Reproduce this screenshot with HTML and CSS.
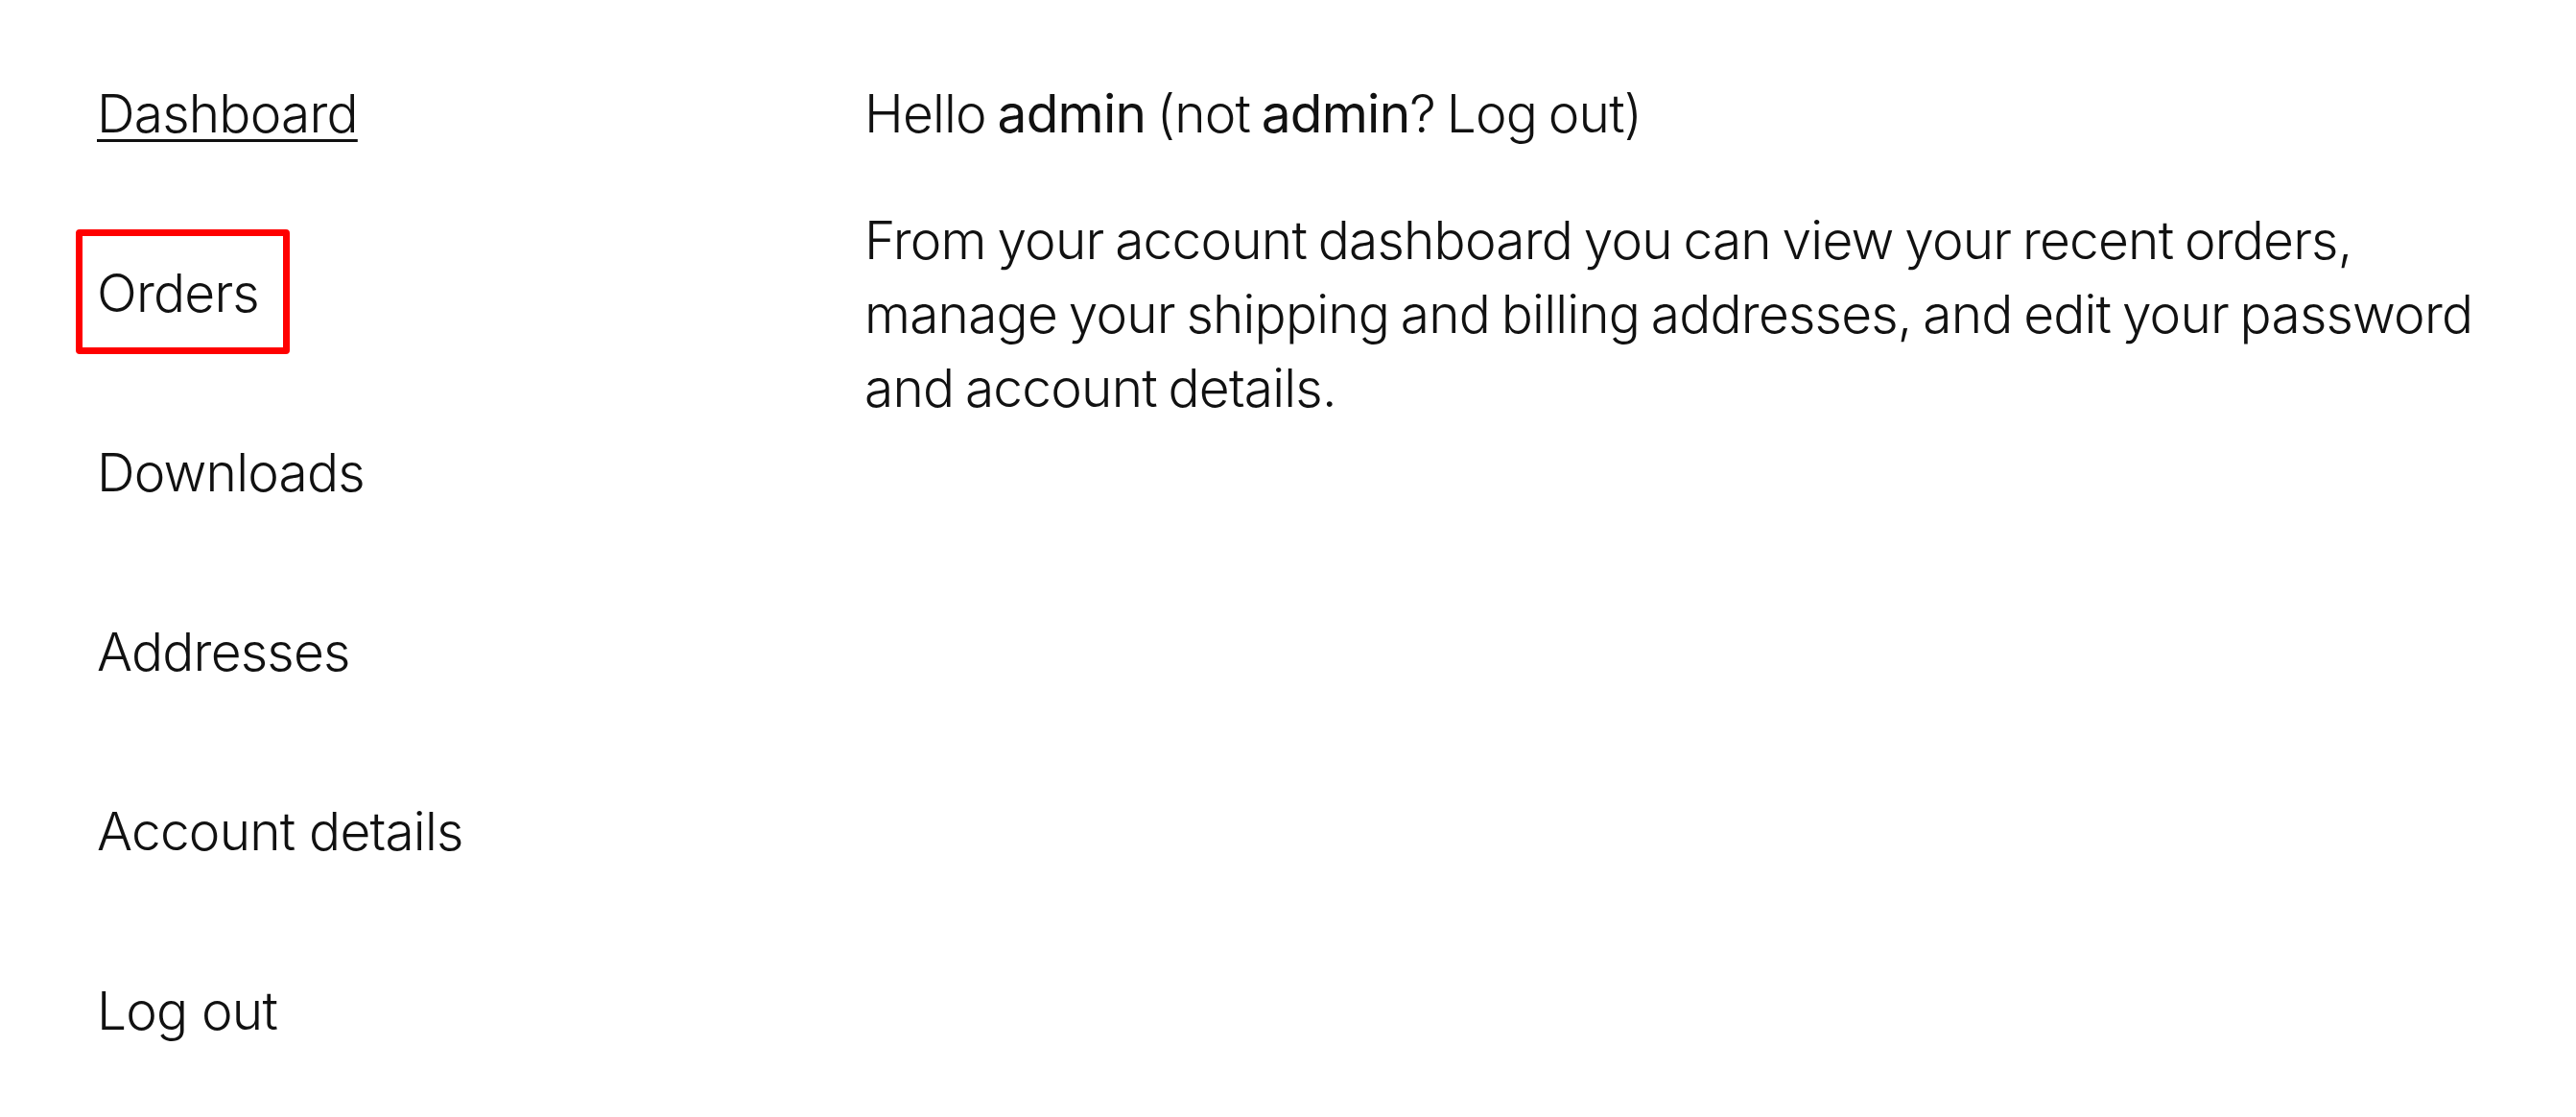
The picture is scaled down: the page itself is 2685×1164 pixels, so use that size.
FILE: index.html
```html
<!DOCTYPE html>
<html lang="en">
<head>
    <meta charset="UTF-8">
    <meta name="viewport" content="width=device-width, initial-scale=1.0">
    <title>My account</title>
    <link rel="stylesheet" href="styles.css">
</head>
<body>
    <div class="account">
        <nav class="account-nav">
            <ul>
                <li><a href="#" class="current">Dashboard</a></li>
                <li><a href="#" class="marked">Orders</a></li>
                <li><a href="#">Downloads</a></li>
                <li><a href="#">Addresses</a></li>
                <li><a href="#">Account details</a></li>
                <li><a href="#">Log out</a></li>
            </ul>
        </nav>

        <div class="account-content">
            <p>Hello <strong>admin</strong> (not <strong>admin</strong>? <a href="#">Log out</a>)</p>
            <p>From your account dashboard you can view your recent orders, manage your shipping and billing addresses, and edit your password and account details.</p>
        </div>
    </div>
</body>
</html>
```

FILE: styles.css
```css
body {
    margin: 0;
    background: #fff;
    color: #111;
    font-family: Inter, "Open Sans", sans-serif;
    font-weight: 300;
    font-size: 55px;
    line-height: 77px;
    letter-spacing: -0.8px;
}
a {
    color: inherit;
    text-decoration: none;
}
.account {
    display: grid;
    grid-template-columns: 800px 1700px;
    padding: 80px 0 0 101px;
}
.account-nav ul {
    list-style: none;
    margin: 0;
    padding: 0;
    display: flex;
    flex-direction: column;
    gap: 110px;
}
.account-nav a {
    position: relative;
    display: inline-block;
}
.account-nav a.current {
    text-decoration: underline;
    text-decoration-thickness: 3px;
    text-underline-offset: 7px;
}
/* red marker box round the Orders link */
.account-nav a.marked::after {
    content: "";
    position: absolute;
    top: -28px;
    bottom: -25px;
    left: -22px;
    right: -32px;
    border: 7px solid #f00;
    border-radius: 4px;
}
.account-content p {
    margin: 0 0 55px;
    word-spacing: -3px;
}
.account-content strong {
    font-weight: 400;
}
```
